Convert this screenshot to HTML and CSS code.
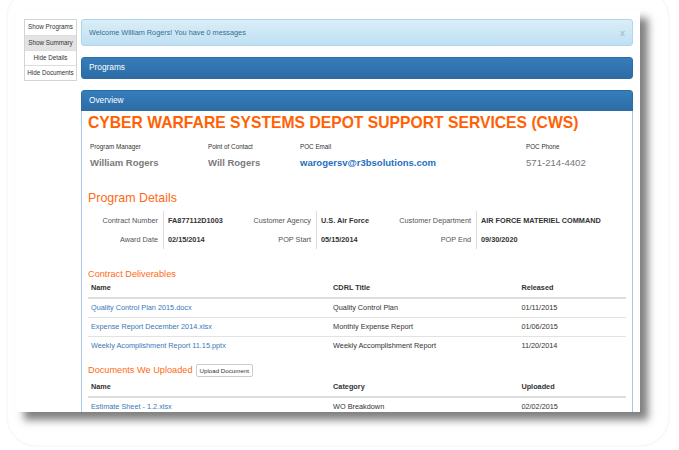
FILE: index.html
```html
<!DOCTYPE html>
<html>
<head>
<meta charset="utf-8">
<link rel="stylesheet" href="styles.css">
</head>
<body>
<div class="stage">
  <div class="frame">
    <div class="side">
      <div class="sbtn">Show Programs</div>
      <div class="sbtn active">Show Summary</div>
      <div class="sbtn">Hide Details</div>
      <div class="sbtn">Hide Documents</div>
    </div>
    <div class="main">
      <div class="alert">
        <span>Welcome William Rogers! You have 0 messages</span>
        <span class="close">x</span>
      </div>
      <div class="panel collapsed">
        <div class="panel-heading">Programs</div>
      </div>
      <div class="panel">
        <div class="panel-heading">Overview</div>
        <div class="panel-body">
          <h1 class="title">CYBER WARFARE SYSTEMS DEPOT SUPPORT SERVICES (CWS)</h1>
          <div class="info">
            <div class="lbl">Program Manager</div>
            <div class="lbl">Point of Contact</div>
            <div class="lbl">POC Email</div>
            <div class="lbl">POC Phone</div>
            <div class="val">William Rogers</div>
            <div class="val">Will Rogers</div>
            <div class="val email">warogersv@r3bsolutions.com</div>
            <div class="val phone">571-214-4402</div>
          </div>
          <h2 class="sec-big">Program Details</h2>
          <div class="details">
            <div class="dl">Contract Number</div><div class="dv">FA877112D1003</div>
            <div class="dl">Customer Agency</div><div class="dv">U.S. Air Force</div>
            <div class="dl">Customer Department</div><div class="dv">AIR FORCE MATERIEL COMMAND</div>
            <div class="dl">Award Date</div><div class="dv">02/15/2014</div>
            <div class="dl">POP Start</div><div class="dv">05/15/2014</div>
            <div class="dl">POP End</div><div class="dv">09/30/2020</div>
          </div>
          <h3 class="sec">Contract Deliverables</h3>
          <table class="tbl">
            <colgroup><col class="c1"><col class="c2"><col class="c3"></colgroup>
            <thead><tr><th>Name</th><th>CDRL Title</th><th>Released</th></tr></thead>
            <tbody>
              <tr><td><a>Quality Control Plan 2015.docx</a></td><td>Quality Control Plan</td><td>01/11/2015</td></tr>
              <tr><td><a>Expense Report December 2014.xlsx</a></td><td>Monthly Expense Report</td><td>01/06/2015</td></tr>
              <tr><td><a>Weekly Acomplishment Report 11.15.pptx</a></td><td>Weekly Accomplishment Report</td><td>11/20/2014</td></tr>
            </tbody>
          </table>
          <div class="docs-head">
            <h3 class="sec">Documents We Uploaded</h3>
            <span class="upload">Upload Document</span>
          </div>
          <table class="tbl">
            <colgroup><col class="c1"><col class="c2"><col class="c3"></colgroup>
            <thead><tr><th>Name</th><th>Category</th><th>Uploaded</th></tr></thead>
            <tbody>
              <tr><td><a>Estimate Sheet - 1.2.xlsx</a></td><td>WO Breakdown</td><td>02/02/2015</td></tr>
            </tbody>
          </table>
        </div>
      </div>
    </div>
  </div>
</div>
</body>
</html>
```
FILE: styles.css
```css
html, body {
  margin: 0;
  padding: 0;
  background: #ffffff;
  overflow: hidden;
}
body {
  font-family: "Liberation Sans", Arial, sans-serif;
  color: #333;
}
.stage {
  margin: -12px 0 0 6px;
  width: 664px;
  height: 459px;
  border: 2px solid #f9f9f9;
  border-radius: 30px;
  padding: 20px 0 0 8px;
  box-sizing: border-box;
}
.frame {
  width: 624px;
  height: 402px;
  box-sizing: border-box;
  background: #fff;
  overflow: hidden;
  box-shadow: 8px 8px 8px rgba(0, 0, 0, 0.5);
  display: flex;
  align-items: flex-start;
  gap: 4px;
  padding: 9px 7px 0 8px;
}
.side {
  width: 53px;
  flex: none;
  border: 1px solid #d4d4d4;
  box-sizing: border-box;
  background: #fff;
}
.sbtn {
  height: 15px;
  line-height: 14px;
  font-size: 6.3px;
  text-align: center;
  color: #333;
  border-top: 1px solid #ddd;
  box-sizing: border-box;
  white-space: nowrap;
}
.sbtn:first-child { border-top: 0; }
.sbtn.active { background: #e3e3e3; }
.main {
  flex: 1;
  min-width: 0;
}
.alert {
  height: 27px;
  box-sizing: border-box;
  border: 1px solid #aed6ee;
  border-radius: 3px;
  background: linear-gradient(#daeef8, #bfe0f2);
  display: flex;
  align-items: center;
  justify-content: space-between;
  padding: 0 7px 0 7px;
  font-size: 7.3px;
  color: #31708f;
  margin-bottom: 11px;
}
.close {
  font-size: 9px;
  font-weight: bold;
  color: #a8c2d2;
}
.panel {
  border: 1px solid #2e6da4;
  border-radius: 3px;
  margin-bottom: 11px;
  background: #fff;
}
.panel-heading {
  background: linear-gradient(#357dbb, #2d6ca6);
  color: #fff;
  font-size: 8.3px;
  height: 20px;
  line-height: 19px;
  padding-left: 7px;
}
.panel-body {
  background: #fff;
  padding: 0 6px 20px 6px;
  margin: 0 -1px;
  border-left: 1px solid #a9c7e6;
  border-right: 1px solid #a9c7e6;
}
.title {
  margin: 0;
  font-size: 15.7px;
  line-height: 24px;
  font-weight: bold;
  color: #ff6205;
  white-space: nowrap;
}
.info {
  display: grid;
  grid-template-columns: 118px 92px 226px 1fr;
  padding-left: 2px;
  margin-top: 7px;
}
.lbl {
  font-size: 6.3px;
  line-height: 10px;
  color: #333;
}
.val {
  font-size: 9.5px;
  line-height: 14px;
  font-weight: bold;
  color: #7a7a7a;
  margin-top: 4px;
  white-space: nowrap;
}
.val.email { color: #1f6fc0; }
.val.phone { font-weight: normal; color: #777; font-size: 9.6px; }
.sec-big {
  margin: 19px 0 0 0;
  font-size: 12.4px;
  line-height: 18px;
  font-weight: normal;
  color: #ff6a14;
}
.details {
  display: grid;
  grid-template-columns: 75px 72px 81px 80px 80px 1fr;
  margin-top: 4px;
}
.dl, .dv {
  height: 19px;
  line-height: 19px;
  font-size: 7.3px;
  white-space: nowrap;
}
.dl {
  text-align: right;
  padding-right: 5px;
  color: #555;
}
.dv {
  border-left: 1px solid #dcdcdc;
  padding-left: 4px;
  font-weight: bold;
  color: #333;
}
.sec {
  margin: 18px 0 0 0;
  font-size: 9.2px;
  line-height: 14px;
  font-weight: normal;
  color: #ff6a14;
}
.tbl {
  width: 100%;
  border-collapse: collapse;
  table-layout: fixed;
  font-size: 7.3px;
}
.c1 { width: 45%; }
.c2 { width: 35%; }
.c3 { width: 20%; }
.tbl th {
  text-align: left;
  font-weight: bold;
  line-height: 13px;
  padding: 0 3px 3px;
  border-bottom: 2px solid #dddddd;
  color: #333;
}
.tbl td {
  line-height: 18px;
  padding: 0 3px;
  white-space: nowrap;
  color: #333;
}
.tbl tr + tr td { border-top: 1px solid #e2e2e2; }
.tbl a { color: #3a78b8; }
.docs-head {
  display: flex;
  align-items: center;
  gap: 3px;
  margin-top: 8px;
  height: 14px;
  margin-bottom: 3px;
}
.docs-head .sec { margin: 0; }
.upload {
  font-size: 6.2px;
  line-height: 11px;
  padding: 0 3px;
  border: 1px solid #ccc;
  border-radius: 2px;
  background: #fff;
  color: #333;
}
```
